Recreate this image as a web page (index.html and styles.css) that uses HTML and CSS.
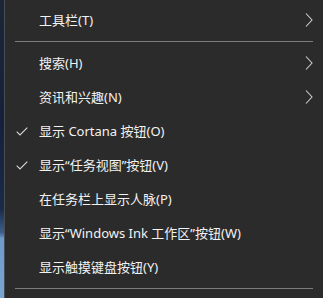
FILE: index.html
```html
<!DOCTYPE html>
<html lang="zh-CN">
<head>
<meta charset="utf-8">
<link rel="stylesheet" href="styles.css">
</head>
<body>
<div class="screen">
  <div class="desktop-edge"></div>
  <div class="menu">
    <div class="item">
      <span class="check"></span><span class="label">工具栏(T)</span>
      <svg class="chev" viewBox="0 0 8 14" width="8" height="14"><path d="M1 0.5 L7 7 L1 13.5" fill="none" stroke="#cfcfcf" stroke-width="1.1"/></svg>
    </div>
    <div class="sep"></div>
    <div class="item">
      <span class="check"></span><span class="label">搜索(H)</span>
      <svg class="chev" viewBox="0 0 8 14" width="8" height="14"><path d="M1 0.5 L7 7 L1 13.5" fill="none" stroke="#cfcfcf" stroke-width="1.1"/></svg>
    </div>
    <div class="item">
      <span class="check"></span><span class="label">资讯和兴趣(N)</span>
      <svg class="chev" viewBox="0 0 8 14" width="8" height="14"><path d="M1 0.5 L7 7 L1 13.5" fill="none" stroke="#cfcfcf" stroke-width="1.1"/></svg>
    </div>
    <div class="item">
      <span class="check"><svg viewBox="0 0 12 9" width="12" height="9"><path d="M0.7 4.6 L4 7.9 L11.3 0.6" fill="none" stroke="#d8d8d8" stroke-width="1.1"/></svg></span><span class="label">显示 Cortana 按钮(O)</span>
    </div>
    <div class="item">
      <span class="check"><svg viewBox="0 0 12 9" width="12" height="9"><path d="M0.7 4.6 L4 7.9 L11.3 0.6" fill="none" stroke="#d8d8d8" stroke-width="1.1"/></svg></span><span class="label">显示“任务视图”按钮(V)</span>
    </div>
    <div class="item">
      <span class="check"></span><span class="label">在任务栏上显示人脉(P)</span>
    </div>
    <div class="item">
      <span class="check"></span><span class="label">显示“Windows Ink 工作区”按钮(W)</span>
    </div>
    <div class="item">
      <span class="check"></span><span class="label">显示触摸键盘按钮(Y)</span>
    </div>
    <div class="sep"></div>
  </div>
</div>
</body>
</html>
```
FILE: styles.css
```css
html, body {
  margin: 0;
  padding: 0;
  background: #2b2b2b;
}
.screen {
  display: flex;
  width: 323px;
  height: 298px;
  overflow: hidden;
}
.desktop-edge {
  width: 4px;
  flex: none;
  border-right: 1px solid #4a4d52;
  background: linear-gradient(to bottom, #1c2638 0%, #16203a 40%, #1a2a48 70%, #3c5f8c 78%, #6d9bcb 80%, #7aa6d2 100%);
}
.menu {
  flex: 1;
  display: flex;
  flex-direction: column;
  padding-top: 3px;
  background: #2b2b2b;
  font-family: "Noto Sans", "Noto Sans CJK SC", sans-serif;
  font-size: 13px;
  color: #f2f2f2;
}
.item {
  height: 34px;
  display: flex;
  align-items: center;
  padding-right: 10px;
}
.check {
  width: 34px;
  flex: none;
  display: flex;
  justify-content: flex-start;
  padding-left: 11px;
  box-sizing: border-box;
  align-items: center;
}
.check svg { display: block; }
.label {
  flex: 1;
  white-space: nowrap;
  line-height: 1;
}
.chev {
  flex: none;
  display: block;
}
.sep {
  height: 1px;
  background: #7c7c7c;
  margin: 4px 10px;
}
```
